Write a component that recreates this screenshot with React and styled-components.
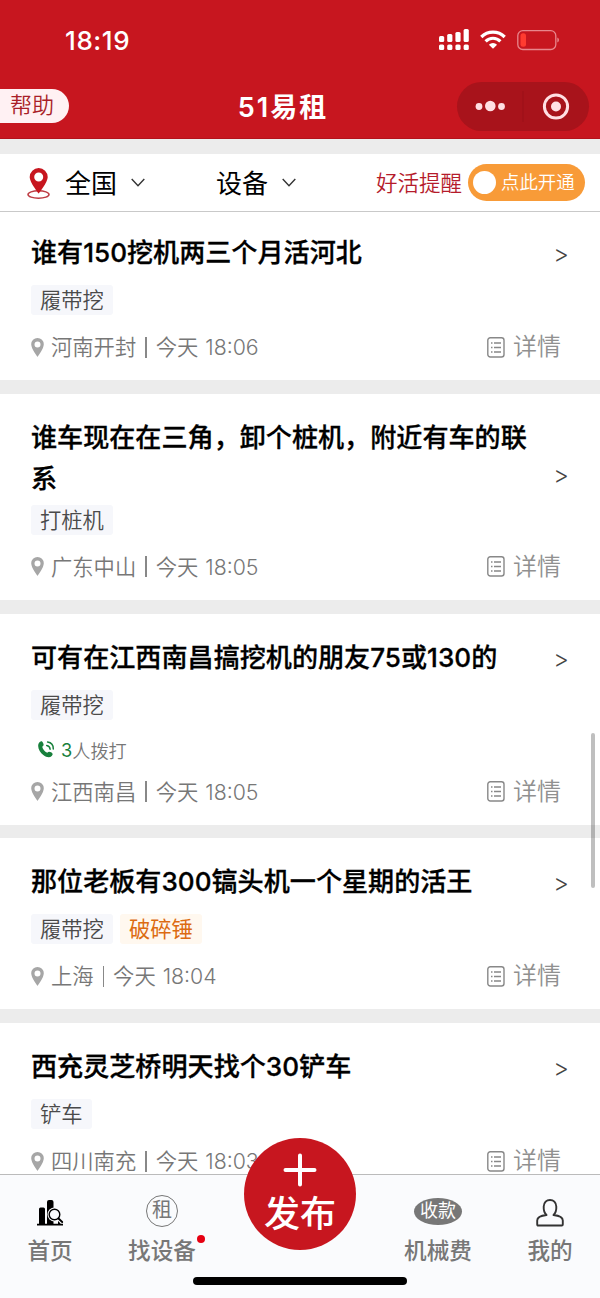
import React from "react";
import styled, { createGlobalStyle } from "styled-components";

const GlobalStyle = createGlobalStyle`
  * {
    box-sizing: border-box;
  }
  body {
    margin: 0;
    background: #fff;
    font-family: Inter, "Noto Sans CJK SC", sans-serif;
  }
`;

const Screen = styled.div`
  width: 600px;
  height: 1298px;
  display: flex;
  flex-direction: column;
  overflow: hidden;
  position: relative;
  background: #ececec;
  white-space: nowrap;
`;

const Header = styled.header`
  height: 139px;
  flex: none;
  background: #c7161f;
  border-bottom: 1px solid #b3121b;
  color: #fff;
`;

const StatusBar = styled.div`
  height: 80px;
  padding: 0 40px 0 65px;
  display: flex;
  align-items: center;
  justify-content: space-between;
`;

const Clock = styled.span`
  font-size: 26px;
  font-weight: 500;
  letter-spacing: 0.6px;
`;

const StatusIcons = styled.svg`
  width: 122px;
  height: 24px;
  display: block;
`;

const NavBar = styled.div`
  height: 52px;
  display: grid;
  grid-template-columns: 180px 204px 1fr;
  align-items: center;
`;

const Help = styled.span`
  width: 69px;
  height: 34px;
  padding-left: 10px;
  border-radius: 0 17px 17px 0;
  background: #fff1f3;
  color: #a91f28;
  font-size: 22px;
  font-weight: 350;
  line-height: 33px;
`;

const NavTitle = styled.h1`
  margin: 0 0 2px 2px;
  text-align: center;
  font-size: 27px;
  font-weight: 600;
  letter-spacing: 2px;
`;

const Capsule = styled.div`
  width: 132px;
  height: 49px;
  margin-left: 73px;
  border-radius: 25px;
  background: #a8131b;
  svg {
    display: block;
  }
`;

const FilterBar = styled.div`
  height: 58px;
  flex: none;
  margin-top: 15px;
  padding: 0 15px 0 25px;
  display: flex;
  align-items: center;
  background: #fff;
  border-bottom: 1px solid #c9c9c9;
  position: relative;
  z-index: 1;
`;

const Filter = styled.div`
  width: ${(props) => props.$width}px;
  padding-top: 2px;
  display: flex;
  align-items: center;
  font-size: 26px;
  line-height: 40px;
  color: #000;
  svg {
    margin-left: 14px;
    margin-bottom: 2px;
  }
`;

const Reminder = styled.span`
  flex: 1;
  margin: 0 6px 3px 0;
  color: #b51b2b;
  font-size: 21.5px;
  font-weight: 350;
  text-align: right;
`;

const Toggle = styled.div`
  width: 117px;
  height: 37px;
  border-radius: 19px;
  padding-left: 5px;
  display: flex;
  align-items: center;
  gap: 5px;
  background: #f89b38;
  color: #fff;
  font-size: 18.4px;
  font-weight: 350;
  line-height: 34px;
  &::before {
    content: "";
    width: 23px;
    height: 23px;
    border-radius: 50%;
    background: #fff;
  }
  span {
    margin-bottom: 1px;
  }
`;

const List = styled.main`
  flex: 1;
  min-height: 0;
  overflow: hidden;
`;

const ListInner = styled.div`
  margin-top: -3px;
  display: flex;
  flex-direction: column;
  gap: 13.8px;
`;

const CardStyles = styled.article`
  padding: 23px 31px 18px;
  background: #fff;

  .top {
    display: flex;
    justify-content: space-between;
  }
  .title {
    width: 505px;
    min-height: 47px;
    margin: 0;
    font-size: 26.1px;
    font-weight: 500;
    line-height: 41px;
    color: #000;
    white-space: pre-line;
    -webkit-text-stroke: 0.3px #000;
  }
  .arrow {
    width: 14px;
    margin-top: ${(props) => (props.$tall ? 44 : 8)}px;
    margin-right: 1px;
    display: flex;
    justify-content: center;
    font-size: 24px;
    font-weight: 300;
    line-height: 30px;
    color: #444;
  }
  .tags {
    height: 30px;
    margin-top: 6px;
    display: flex;
    gap: 7px;
  }
  .calls {
    height: 24px;
    margin: 18px 0 -2px 6px;
    display: flex;
    align-items: center;
    font-size: 18.2px;
    font-weight: 350;
    color: #777;
    svg {
      margin-right: 5px;
    }
    b {
      font-weight: 400;
      color: #18803c;
    }
  }
  .meta {
    height: 30px;
    margin-top: 17px;
    display: flex;
    align-items: center;
    font-size: 21.3px;
    font-weight: 350;
    line-height: 28px;
    color: #777;
  }
`;

const Tag = styled.span`
  height: 30px;
  padding: 0 9px;
  border-radius: 3px;
  background: ${(props) => (props.$hot ? "#fff8ef" : "#f6f7fb")};
  color: ${(props) => (props.$hot ? "#dc6b12" : "#4a4a4a")};
  font-size: 21.3px;
  font-weight: ${(props) => (props.$hot ? 400 : 350)};
  line-height: 30px;
`;

const Place = styled.span`
  margin-left: 7px;
`;

const Time = styled.span`
  word-spacing: 1px;
`;

const Bar = styled.i`
  width: 1.5px;
  height: 21px;
  margin: 0 9px;
  background: #888;
`;

const Detail = styled.span`
  margin-left: auto;
  margin-right: 8px;
  display: flex;
  align-items: center;
  gap: 8px;
  font-size: 24px;
  color: #909090;
`;

const ScrollThumb = styled.div`
  position: absolute;
  right: 5px;
  top: 733px;
  width: 4px;
  height: 155px;
  border-radius: 2px;
  background: rgba(0, 0, 0, 0.25);
`;

const TabBar = styled.nav`
  height: 124px;
  flex: none;
  display: grid;
  grid-template-columns: 100px 124px 152px 124px 100px;
  background: #fafbfd;
  border-top: 1px solid #bbb;
  position: relative;
`;

const TabStyles = styled.div`
  padding-top: 18px;
  display: flex;
  flex-direction: column;
  align-items: center;
  font-size: 22.6px;
  font-weight: 500;
  line-height: 32px;
  color: #777;

  .icon {
    height: 38px;
    margin-bottom: 4px;
    display: flex;
    align-items: center;
    justify-content: center;
    font-weight: 400;
  }
  .label {
    position: relative;
  }
`;

const RentIcon = styled.span`
  width: 32px;
  height: 32px;
  margin-bottom: 2px;
  border: 1.3px solid #777;
  border-radius: 50%;
  font-size: 20px;
  line-height: 29px;
  text-align: center;
`;

const PayIcon = styled.span`
  width: 48px;
  height: 27px;
  margin-bottom: 2px;
  border-radius: 50%;
  background: #777;
  color: #fff;
  font-size: 18px;
  line-height: 26px;
  text-align: center;
`;

const Dot = styled.i`
  position: absolute;
  top: 0;
  right: -9px;
  width: 8px;
  height: 8px;
  border-radius: 50%;
  background: #e60012;
`;

const Publish = styled.button`
  width: 112px;
  height: 112px;
  margin: -37px auto 0;
  padding: 15px 0 0;
  border: 0;
  border-radius: 50%;
  background: #c7161f;
  color: #fff;
  font-family: inherit;
  font-size: 36px;
  font-weight: 500;
  line-height: 54px;
  display: flex;
  flex-direction: column;
  align-items: center;
`;

const HomeIndicator = styled.div`
  position: absolute;
  left: 193px;
  bottom: 13px;
  width: 214px;
  height: 8px;
  border-radius: 4px;
  background: #000;
`;

const posts = [
  { title: "谁有150挖机两三个月活河北", tags: ["履带挖"], place: "河南开封", time: "18:06" },
  {
    title: "谁车现在在三角，卸个桩机，附近有车的联\n系",
    tags: ["打桩机"],
    place: "广东中山",
    time: "18:05",
    tall: true,
  },
  {
    title: "可有在江西南昌搞挖机的朋友75或130的",
    tags: ["履带挖"],
    calls: 3,
    place: "江西南昌",
    time: "18:05",
  },
  {
    title: "那位老板有300镐头机一个星期的活王",
    tags: ["履带挖"],
    hotTag: "破碎锤",
    place: "上海",
    time: "18:04",
  },
  { title: "西充灵芝桥明天找个30铲车", tags: ["铲车"], place: "四川南充", time: "18:03" },
];

function Chevron() {
  return (
    <svg width="14" height="9" viewBox="0 0 14 9" fill="none" stroke="#333" strokeWidth="1.4">
      <path d="M.7 1 7 7.7 13.3 1" />
    </svg>
  );
}

function Post(props) {
  const { title, tags, hotTag, calls, place, time, tall } = props;
  return (
    <CardStyles $tall={tall}>
      <div className="top">
        <h2 className="title">{title}</h2>
        <span className="arrow">&gt;</span>
      </div>
      <div className="tags">
        {tags.map((tag) => (
          <Tag key={tag}>{tag}</Tag>
        ))}
        {hotTag && <Tag $hot>{hotTag}</Tag>}
      </div>
      {calls && (
        <div className="calls">
          <svg width="19" height="19" viewBox="0 0 19 19" fill="none">
            <path
              d="M2.8 2.1C4.3.7 5.3 1.3 6.1 3.1c.8 1.8.8 2.5-.9 3.7.5 2.5 2.5 4.9 5 6 1.3-1.4 2.2-1.5 3.9-.5 1.9 1.2 2 2.2.6 3.7-1.9 2-5.2 1.6-8.4-1C2.3 11.7-.9 5.5 2.8 2.1Z"
              fill="#18803c"
            />
            <path
              d="M9.7 5.5c2 .3 3.3 1.7 3.4 3.8M10.6 2c3.5.5 5.8 3.2 5.7 7"
              stroke="#18803c"
              strokeWidth="1.5"
              strokeLinecap="round"
            />
          </svg>
          <b>{calls}</b>人拨打
        </div>
      )}
      <div className="meta">
        <svg width="13" height="19" viewBox="0 0 13 19">
          <path
            d="M6.5 0A6.3 6.3 0 0 0 .2 6.3C.2 10.8 6.5 19 6.5 19s6.3-8.2 6.3-12.7A6.3 6.3 0 0 0 6.5 0Zm0 3.5a3 3 0 1 1 0 6 3 3 0 0 1 0-6Z"
            fill="#a6a6a6"
          />
        </svg>
        <Place>{place}</Place>
        <Bar />
        <Time>今天 {time}</Time>
        <Detail>
          <svg width="18" height="21" viewBox="0 0 18 21" fill="none" stroke="#888">
            <rect x=".8" y=".8" width="16.2" height="19.2" rx="2.5" strokeWidth="1.4" />
            <path d="M4 6h1.5M7 6h7M4 10.5h1.5M7 10.5h7M4 15h1.5M7 15h7" strokeWidth="1.3" />
          </svg>
          <span>详情</span>
        </Detail>
      </div>
    </CardStyles>
  );
}

function Tab(props) {
  const { label, dot, children } = props;
  return (
    <TabStyles>
      <div className="icon">{children}</div>
      <span className="label">
        {label}
        {dot && <Dot />}
      </span>
    </TabStyles>
  );
}

function App() {
  return (
    <Screen>
      <GlobalStyle />
      <Header>
        <StatusBar>
          <Clock>18:19</Clock>
          {/* signal, wifi and battery */}
          <StatusIcons viewBox="0 0 122 24" fill="#fff">
            {[0, 2, 4, 7].map((rise, i) => (
              <g key={rise}>
                <rect x={1 + i * 8.2} y={8 - rise} width="5.2" height={6 + rise} rx="1.5" />
                <rect x={1 + i * 8.2} y="16.5" width="5.2" height="5.5" rx="1.5" />
              </g>
            ))}
            <g transform="translate(42 1.5)">
              <path d="M13 19.3 8.9 15.2a5.9 5.9 0 0 1 8.2 0Z" />
              <g fill="none" stroke="#fff" strokeWidth="3.2">
                <path d="M5.6 11.8a10.5 10.5 0 0 1 14.8 0M1.3 7.5a16.5 16.5 0 0 1 23.4 0" />
              </g>
            </g>
            <rect x="79.8" y="2.7" width="38" height="18.8" rx="5" fill="none" stroke="#e8868c" strokeWidth="1.3" />
            <rect x="82.5" y="5.3" width="5.5" height="13.5" rx="2.5" fill="#ff3b30" />
            <path d="M119.3 9.5c2.2.8 2.2 4.2 0 5Z" fill="#e8868c" />
          </StatusIcons>
        </StatusBar>
        <NavBar>
          <Help>帮助</Help>
          <NavTitle>51易租</NavTitle>
          <Capsule>
            <svg width="132" height="49" viewBox="0 0 132 49" fill="#ffdfe3">
              <circle cx="22" cy="24.5" r="3.4" />
              <circle cx="33.3" cy="24" r="5.3" />
              <circle cx="44.5" cy="24.5" r="3.4" />
              <path d="M66 9v31" stroke="#9a1018" />
              <circle cx="99" cy="24.5" r="11.6" fill="none" stroke="#ffdfe3" strokeWidth="3" />
              <circle cx="99" cy="24.5" r="5" />
            </svg>
          </Capsule>
        </NavBar>
      </Header>

      <FilterBar>
        <Filter $width={191}>
          <svg width="26" height="32" viewBox="0 0 26 32" style={{ margin: "0 13px 0 1px" }}>
            <ellipse cx="12.5" cy="26.5" rx="10.5" ry="3.7" fill="none" stroke="#bd3b42" strokeWidth="1.5" />
            <path
              d="M12.7 0A9 9 0 0 0 3.7 9c0 5.500 9 16.500 9 16.500s9-11 9-16.500a9 9 0 0 0-9-9Zm0 4.500a4.500 4.500 0 1 1 0 9 4.500 4.500 0 0 1 0-9Z"
              fill="#c7161f"
            />
          </svg>
          全国
          <Chevron />
        </Filter>
        <Filter $width={82}>
          设备
          <Chevron />
        </Filter>
        <Reminder>好活提醒</Reminder>
        <Toggle>
          <span>点此开通</span>
        </Toggle>
      </FilterBar>

      <List>
        <ListInner>
          {posts.map((post) => (
            <Post key={post.title} {...post} />
          ))}
        </ListInner>
      </List>
      <ScrollThumb />

      <TabBar>
        <Tab label="首页">
          <svg width="28" height="30" viewBox="0 0 28 30">
            <path
              d="M1 28.5v-1.7h2V12q0-1.5 1.5-1.5h3q1.5 0 1.5 1.5v14.8h2V5q0-2 2-2h2.5q2 0 2 2v21.8H22V24h2.5v2.8H27v1.7Z"
              fill="#000"
            />
            <circle cx="18.5" cy="17.5" r="7" fill="#fafbfd" />
            <path d="m22 21 4 4" stroke="#fafbfd" strokeWidth="4" />
            <circle cx="18.5" cy="17.5" r="5.3" fill="#fafbfd" stroke="#000" strokeWidth="1.4" />
            <path d="m22.5 21.5 3.7 3.5" stroke="#000" strokeWidth="1.9" strokeLinecap="round" />
          </svg>
        </Tab>
        <Tab label="找设备" dot>
          <RentIcon>租</RentIcon>
        </Tab>
        <Publish>
          <svg width="34" height="34" viewBox="0 0 34 34" stroke="#fff" strokeWidth="4" strokeLinecap="round">
            <path d="M17 2.5v29M2.5 17h29" />
          </svg>
          发布
        </Publish>
        <Tab label="机械费">
          <PayIcon>收款</PayIcon>
        </Tab>
        <Tab label="我的">
          <svg width="28" height="30" viewBox="0 0 28 30" fill="none" stroke="#333" strokeWidth="1.9" strokeLinejoin="round">
            <path d="M10.5 18C8.3 16 7.5 13 7.7 9.5c.2-4 2.800-6.500 6.300-6.500s6.100 2.500 6.300 6.500c.2 3.500-.6 6.500-2.800 8.500 5.500.6 9.300 2 9.300 5.500v4q0 1-1 1H2.200q-1 0-1-1v-4c0-3.500 3.800-4.900 9.300-5.500Z" />
          </svg>
        </Tab>
        <HomeIndicator />
      </TabBar>
    </Screen>
  );
}

export default App;
